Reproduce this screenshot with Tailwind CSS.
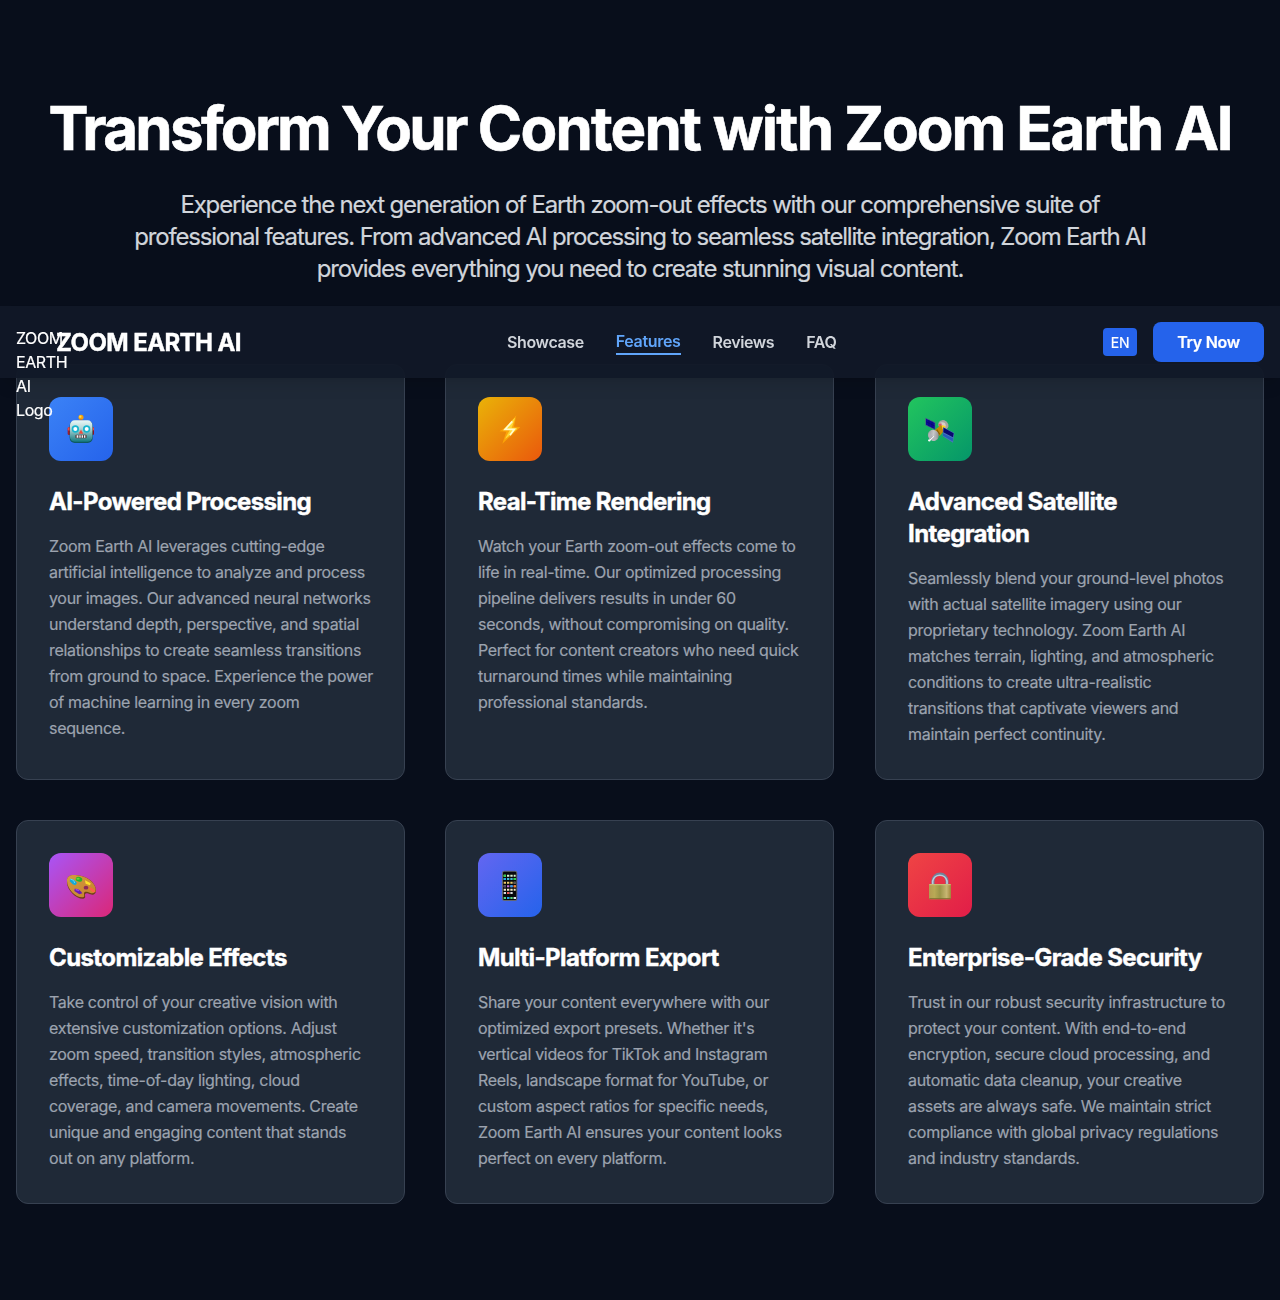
<!DOCTYPE html>
<html lang="en">
<head>
<meta charset="utf-8">
<title>Zoom Earth AI</title>
<script src="https://cdn.jsdelivr.net/npm/@tailwindcss/browser@4"></script>
</head>
<body class="bg-[#080e1b] font-['Inter',sans-serif] text-white h-[1300px] overflow-hidden [-webkit-text-stroke:0.2px_currentColor]">
<header class="fixed top-[306px] inset-x-0 z-10 h-[72px] bg-[#111827]/95 shadow-lg px-4 flex items-center justify-between">
  <div class="flex items-center gap-2">
    <div class="w-8 h-8 leading-6 tracking-[-0.4px]">ZOOM EARTH AI Logo</div>
    <span class="pt-0.5 text-2xl font-bold whitespace-nowrap tracking-[-0.6px] [-webkit-text-stroke:0.4px_currentColor]">ZOOM EARTH AI</span>
  </div>
  <nav class="flex items-center gap-8 font-semibold text-[#d1d5db] tracking-[-0.4px] [-webkit-text-stroke:0]">
    <a>Showcase</a>
    <a class="text-[#60a5fa] border-b-2 border-[#60a5fa] tracking-[-0.32px]">Features</a>
    <a>Reviews</a>
    <a class="tracking-[-0.3px]">FAQ</a>
  </nav>
  <div class="flex items-center gap-4">
    <span class="h-7 px-2 pt-px rounded bg-[#2563eb] text-sm leading-7 tracking-[-0.3px]">EN</span>
    <span class="h-10 px-6 rounded-lg bg-[#2563eb] font-semibold leading-10 tracking-[-0.28px]">Try Now</span>
  </div>
</header>
<main class="px-4 pt-24">
  <h1 class="text-center text-6xl leading-[64px] font-bold whitespace-nowrap tracking-[-2.1px] [-webkit-text-stroke:0.6px_currentColor]"><span class="tracking-[-2.7px]">Transform Your</span> <span class="tracking-[-1.8px]">Content with</span> Zoom Earth AI</h1>
  <p class="mt-[29px] text-center text-2xl text-[#d1d5db] whitespace-nowrap tracking-[-1.18px]">Experience the next generation of Earth zoom-out effects with our comprehensive suite of<br>professional features. From advanced AI processing to seamless satellite integration, Zoom Earth AI<br>provides everything you need to create stunning visual content.</p>

  <div class="mt-[79px] grid grid-cols-[389px_390px_389px] gap-10 whitespace-nowrap">
    <article class="w-[389px] rounded-xl border border-[#374151] bg-[#1f2937] p-8">
      <div class="size-16 rounded-xl bg-linear-to-br/srgb from-[#3b82f6] to-[#2563eb]">
        <svg viewBox="0 0 192 192" class="size-16">
          <defs>
            <linearGradient id="rb" x1="0" y1="0" x2="0" y2="1"><stop offset="0" stop-color="#e8f8f7"/><stop offset=".35" stop-color="#b9d9da"/><stop offset="1" stop-color="#157a80"/></linearGradient>
          </defs>
          <rect x="56" y="91" width="9" height="23" rx="4" fill="#9d1d2c"/><rect x="56" y="91" width="9" height="10" rx="4" fill="#ef4444"/>
          <rect x="126" y="91" width="9" height="23" rx="4" fill="#8b1425"/><rect x="126" y="91" width="9" height="10" rx="4" fill="#ef4444"/>
          <path d="M84 72q12-8 24 0z" fill="#5a4a91"/>
          <rect x="93" y="63" width="6" height="10" fill="#6b3f78"/>
          <circle cx="96" cy="61" r="7.500" fill="#f59e0b"/><circle cx="94" cy="59" r="3.500" fill="#fde047"/>
          <rect x="62" y="71" width="69" height="67" rx="15" fill="#0e5960"/>
          <rect x="63" y="70" width="67" height="64" rx="14" fill="url(#rb)"/>
          <circle cx="79" cy="96" r="11" fill="#16b5cf"/><circle cx="79" cy="96" r="6" fill="#fff"/>
          <circle cx="113" cy="96" r="11" fill="#16b5cf"/><circle cx="113" cy="96" r="6" fill="#fff"/>
          <path d="M96 98l7 12H89z" fill="#ef4a3c"/>
          <rect x="79" y="113" width="34" height="11" rx="3" fill="#573f42"/>
          <path d="M83 115h5v7h-5zm8 0h4v7h-4zm7 0h4v7h-4zm7 0h4v7h-4z" fill="#f1f5f5"/>
        </svg>
      </div>
      <h3 class="mt-[25px] text-2xl font-bold tracking-[-0.65px] [-webkit-text-stroke:0.4px_currentColor]">AI-Powered Processing</h3>
      <p class="mt-[15px] leading-[26px] text-[#9ca3af] tracking-[-0.32px]">Zoom Earth AI leverages cutting-edge<br>artificial intelligence to analyze and process<br>your images. Our advanced neural networks<br>understand depth, perspective, and spatial<br>relationships to create seamless transitions<br>from ground to space. Experience the power<br>of machine learning in every zoom<br>sequence.</p>
    </article>

    <article class="w-[389px] rounded-xl border border-[#374151] bg-[#1f2937] p-8">
      <div class="size-16 rounded-xl bg-linear-to-br/srgb from-[#eab308] to-[#ea580c]">
        <svg viewBox="0 0 192 192" class="size-16">
          <path d="M115 55L80 93l-16 10 21 1-12 36 54-50-19-1z" fill="#fba408"/>
          <path d="M110 64L78 97h20l-15 27 34-29-17-2z" fill="#fdd93a" stroke="#fdd93a" stroke-width="2"/>
          <path d="M103 73L81 97h28l-13 18" fill="none" stroke="#fffbd0" stroke-width="5"/>
        </svg>
      </div>
      <h3 class="mt-[25px] text-2xl font-bold tracking-[-0.65px] [-webkit-text-stroke:0.4px_currentColor]">Real-Time Rendering</h3>
      <p class="mt-[15px] leading-[26px] text-[#9ca3af] tracking-[-0.31px]">Watch your Earth zoom-out effects come to<br>life in real-time. Our optimized processing<br>pipeline delivers results in under 60<br>seconds, without compromising on quality.<br>Perfect for content creators who need quick<br>turnaround times while maintaining<br>professional standards.</p>
    </article>

    <article class="w-[389px] rounded-xl border border-[#374151] bg-[#1f2937] p-8">
      <div class="size-16 rounded-xl bg-linear-to-br/srgb from-[#22c55e] to-[#059669]">
        <svg viewBox="0 0 192 192" class="size-16">
          <defs><linearGradient id="dish" x1="0" y1="0" x2="1" y2="1"><stop offset="0" stop-color="#8a8a8c"/><stop offset=".5" stop-color="#c8c8ca"/><stop offset="1" stop-color="#77777b"/></linearGradient></defs>
          <path d="M52 62l30 14v23L52 85z" fill="#4a5f86"/><path d="M54 65l26 13v18L54 83z" fill="#0c0b97"/>
          <path d="M63 69v19m9-15v19M54 74l26 13" stroke="#050860" stroke-width="1.500"/>
          <ellipse cx="106" cy="84" rx="16" ry="14" transform="rotate(35 106 84)" fill="#a9a5a3"/>
          <ellipse cx="103" cy="85" rx="10" ry="9" fill="#d8cfc8"/>
          <path d="M91 81l9-2 2 8-8 4z" fill="#d85a6b"/>
          <path d="M80 100l18-15 15 10-18 22z" fill="#c48a08"/><path d="M101 84l11 3v13l-9-4z" fill="#ffd21f"/>
          <path d="M86 98l9 14" stroke="#8d5e05" stroke-width="4"/>
          <path d="M105 90l34 18-4 29-31-19z" fill="#4a74ba"/><path d="M107 92l30 17-2 12-29-15z" fill="#08086f"/><path d="M105 109l30 15-1 9-29-17z" fill="#245dbb"/>
          <ellipse cx="76" cy="115" rx="16" ry="17" transform="rotate(-35 76 115)" fill="url(#dish)"/>
          <path d="M63 106q9 15 24 17l-9 9q-11-3-17-15z" fill="#b3b3b8"/>
          <path d="M78 118L65 130" stroke="#fff" stroke-width="3"/><circle cx="64" cy="130" r="3.500" fill="#fff"/>
        </svg>
      </div>
      <h3 class="mt-[25px] text-2xl font-bold tracking-[-0.6px] [-webkit-text-stroke:0.4px_currentColor]">Advanced Satellite<br>Integration</h3>
      <p class="mt-[15px] leading-[26px] text-[#9ca3af] tracking-[-0.3px]">Seamlessly blend your ground-level photos<br>with actual satellite imagery using our<br>proprietary technology. Zoom Earth AI<br>matches terrain, lighting, and atmospheric<br>conditions to create ultra-realistic<br>transitions that captivate viewers and<br>maintain perfect continuity.</p>
    </article>

    <article class="w-[389px] rounded-xl border border-[#374151] bg-[#1f2937] p-8">
      <div class="size-16 rounded-xl bg-linear-to-br/srgb from-[#a855f7] to-[#db2777]">
        <svg viewBox="0 0 192 192" class="size-16">
          <defs><linearGradient id="pal" x1="0" y1="0" x2="1" y2="1"><stop offset="0" stop-color="#d39a41"/><stop offset="1" stop-color="#c6822c"/></linearGradient></defs>
          <path d="M54 86C53 69 67 64 84 67c29 2 54 20 57 43 1 13-8 17-17 14-9-4-14-5-16 0-1 4 4 12-5 13-22 1-48-25-49-48z" fill="#704017"/>
          <path d="M54 84C53 68 68 64 84 67c28 2 53 20 56 41 1 12-8 15-16 12-9-4-17-6-19 0-1 5 4 12-4 13C80 134 55 109 54 84z" fill="url(#pal)"/>
          <ellipse cx="111" cy="104" rx="7" ry="5.500" fill="#8d295a"/>
          <path d="M64 77q12 1 20 13l-5 7-8-3-9-9z" fill="#16a9d8"/><path d="M64 78l10 4 3 8" stroke="#61dcf2" stroke-width="3" fill="none"/>
          <ellipse cx="90" cy="79" rx="10" ry="7" transform="rotate(15 90 79)" fill="#24b62b"/><ellipse cx="87" cy="77" rx="5" ry="3" fill="#68db35"/>
          <path d="M108 82l17 9-2 6-13-5z" fill="#ffe229"/>
          <path d="M121 102q13 3 19 14l-9 2-10-9z" fill="#fa6246"/>
          <path d="M77 107q15-1 23 14l-9 3-15-10z" fill="#6b1bb5"/><path d="M80 109l10 4" stroke="#9b4be3" stroke-width="4"/>
        </svg>
      </div>
      <h3 class="mt-[25px] text-2xl font-bold tracking-[-0.6px] [-webkit-text-stroke:0.4px_currentColor]">Customizable Effects</h3>
      <p class="mt-[15px] leading-[26px] text-[#9ca3af] tracking-[-0.31px]">Take control of your creative vision with<br>extensive customization options. Adjust<br>zoom speed, transition styles, atmospheric<br>effects, time-of-day lighting, cloud<br>coverage, and camera movements. Create<br>unique and engaging content that stands<br>out on any platform.</p>
    </article>

    <article class="w-[389px] rounded-xl border border-[#374151] bg-[#1f2937] p-8">
      <div class="size-16 rounded-xl bg-linear-to-br/srgb from-[#6366f1] to-[#2563eb]">
        <svg viewBox="0 0 192 192" class="size-16">
          <rect x="72" y="53" width="46" height="91" rx="7" fill="#626570"/><rect x="75" y="56" width="40" height="85" rx="4" fill="#07090c"/>
          <g stroke-width="6" stroke-dasharray="7 3">
            <path d="M77 68h36" stroke="#d9f3d0"/><path d="M77 78h36" stroke="#42b9d5"/><path d="M77 89h36" stroke="#eac96b"/><path d="M77 100h36" stroke="#c56bd8"/><path d="M77 110h36" stroke="#efe9c8"/><path d="M77 120h27" stroke="#d7dce0"/><path d="M77 135h36" stroke="#52d880"/>
          </g>
          <path d="M77 65h7v6h-7zM107 75h7v6h-7z" fill="#2fd54b"/><path d="M77 75h7v6h-7zM97 97h7v6h-7zM87 132h7v6h-7z" fill="#20a7ed"/><path d="M107 97h7v6h-7z" fill="#f58b23"/><path d="M87 117h7v6h-7z" fill="#f05552"/><path d="M107 86h7v6h-7zM77 97h7v6h-7z" fill="#50545c"/><path d="M107 132h7v6h-7z" fill="#e6e8ef"/>
        </svg>
      </div>
      <h3 class="mt-[25px] text-2xl font-bold tracking-[-0.6px] [-webkit-text-stroke:0.4px_currentColor]">Multi-Platform Export</h3>
      <p class="mt-[15px] leading-[26px] text-[#9ca3af] tracking-[-0.32px]">Share your content everywhere with our<br>optimized export presets. Whether it's<br>vertical videos for TikTok and Instagram<br>Reels, landscape format for YouTube, or<br>custom aspect ratios for specific needs,<br>Zoom Earth AI ensures your content looks<br>perfect on every platform.</p>
    </article>

    <article class="w-[389px] rounded-xl border border-[#374151] bg-[#1f2937] p-8">
      <div class="size-16 rounded-xl bg-linear-to-br/srgb from-[#ef4444] to-[#e11d48]">
        <svg viewBox="0 0 192 192" class="size-16">
          <defs><linearGradient id="lock"><stop offset="0" stop-color="#b59b51"/><stop offset=".25" stop-color="#b8a955"/><stop offset=".5" stop-color="#9b9448"/><stop offset=".8" stop-color="#c8b672"/><stop offset="1" stop-color="#a18439"/></linearGradient></defs>
          <path d="M75 97V84a21 21 0 0 1 42 0v13" fill="none" stroke="#71839a" stroke-width="9"/>
          <path d="M74 97V84a22 22 0 0 1 43 0v13" fill="none" stroke="#b9cbdc" stroke-width="5"/>
          <rect x="63" y="93" width="66" height="46" rx="3" fill="url(#lock)"/>
          <path d="M64 95h64" stroke="#d0c27d" stroke-width="3"/><path d="M64 137h64" stroke="#817132" stroke-width="3"/>
        </svg>
      </div>
      <h3 class="mt-[25px] text-2xl font-bold tracking-[-0.6px] [-webkit-text-stroke:0.4px_currentColor]">Enterprise-Grade Security</h3>
      <p class="mt-[15px] leading-[26px] text-[#9ca3af] tracking-[-0.29px]">Trust in our robust security infrastructure to<br>protect your content. With end-to-end<br>encryption, secure cloud processing, and<br>automatic data cleanup, your creative<br>assets are always safe. We maintain strict<br>compliance with global privacy regulations<br>and industry standards.</p>
    </article>
  </div>
</main>
</body>
</html>
